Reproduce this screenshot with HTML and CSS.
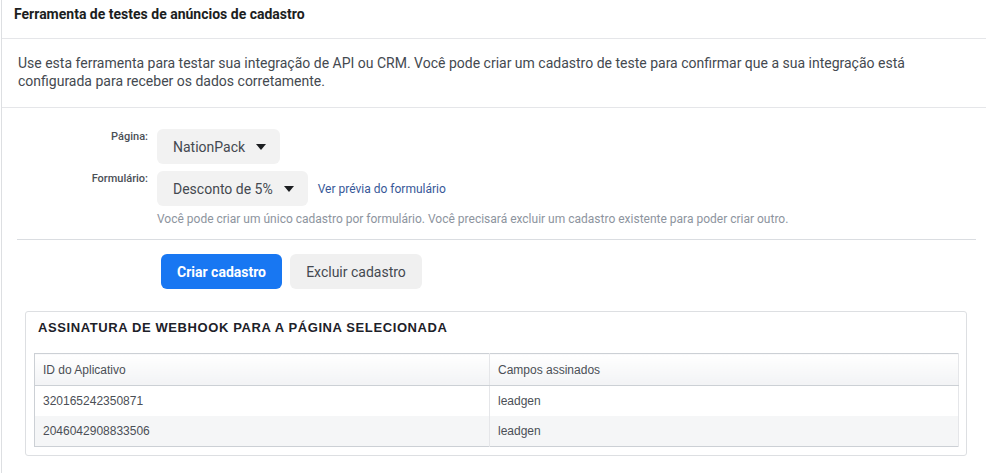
FILE: index.html
```html
<!DOCTYPE html>
<html lang="pt-BR">
<head>
<meta charset="utf-8">
<title>Ferramenta de testes de anúncios de cadastro</title>
<link rel="stylesheet" href="styles.css">
</head>
<body>
<div class="panel">
  <div class="panel-header">Ferramenta de testes de anúncios de cadastro</div>
  <div class="intro">Use esta ferramenta para testar sua integração de API ou CRM. Você pode criar um cadastro de teste para confirmar que a sua integração está configurada para receber os dados corretamente.</div>
  <div class="body">
    <div class="form">
      <div class="label">Página:</div>
      <div class="field">
        <div class="select">NationPack<svg class="caret" width="10" height="6" viewBox="0 0 10 6"><path d="M0 0H10L5 6Z"/></svg></div>
      </div>
      <div class="label">Formulário:</div>
      <div class="field">
        <div class="select">Desconto de 5%<svg class="caret" width="10" height="6" viewBox="0 0 10 6"><path d="M0 0H10L5 6Z"/></svg></div>
        <a class="link" href="#">Ver prévia do formulário</a>
      </div>
      <div></div>
      <div class="note">Você pode criar um único cadastro por formulário. Você precisará excluir um cadastro existente para poder criar outro.</div>
    </div>
    <div class="divider"></div>
    <div class="actions">
      <button class="btn btn-primary">Criar cadastro</button>
      <button class="btn btn-secondary">Excluir cadastro</button>
    </div>
    <div class="card">
      <div class="card-title">ASSINATURA DE WEBHOOK PARA A PÁGINA SELECIONADA</div>
      <table class="grid">
        <thead>
          <tr><th>ID do Aplicativo</th><th>Campos assinados</th></tr>
        </thead>
        <tbody>
          <tr><td>320165242350871</td><td>leadgen</td></tr>
          <tr class="alt"><td>2046042908833506</td><td>leadgen</td></tr>
        </tbody>
      </table>
    </div>
  </div>
</div>
</body>
</html>
```
FILE: styles.css
```css
html, body {
  margin: 0;
  padding: 0;
  background: #fff;
}
body {
  font-family: Roboto, "Liberation Sans", Arial, sans-serif;
  color: #1c1e21;
}
.panel {
  margin-left: 1px;
  border-left: 1px solid #dddfe2;
  min-height: 473px;
  box-sizing: border-box;
}
.panel-header {
  height: 39px;
  box-sizing: border-box;
  padding: 6px 12px 0;
  font-size: 14px;
  line-height: 16px;
  font-weight: 700;
  color: #1c1e21;
  border-bottom: 1px solid #e5e6e9;
}
.intro {
  padding: 15px 16px 17px 16px;
  font-size: 14px;
  line-height: 18px;
  color: #444950;
  border-bottom: 1px solid #e5e6e9;
}
.body {
  padding: 21px 10px 0 15px;
}
.form {
  display: grid;
  grid-template-columns: 131px 1fr;
  column-gap: 9px;
  row-gap: 7px;
}
.label {
  text-align: right;
  font-size: 11px;
  line-height: 14px;
  font-weight: 500;
  color: #4b4f56;
  padding-top: 1px;
}
.field {
  display: flex;
  align-items: center;
  gap: 10px;
}
.select {
  height: 35px;
  box-sizing: border-box;
  padding: 0 14px 0 16px;
  display: inline-flex;
  align-items: center;
  gap: 11px;
  background: #f2f2f2;
  border-radius: 6px;
  font-size: 14px;
  color: #444950;
}
.caret {
  fill: #1c1e21;
}
.link {
  font-size: 12px;
  color: #385898;
  text-decoration: none;
}
.note {
  margin-top: -2px;
  font-size: 12px;
  line-height: 16px;
  color: #8d949e;
}
.divider {
  margin-top: 12px;
  border-top: 1px solid #dadde1;
}
.actions {
  display: flex;
  gap: 8px;
  padding: 14px 0 0 144px;
}
.btn {
  height: 35px;
  padding: 0 16px;
  border: 0;
  border-radius: 6px;
  font-family: Roboto, "Liberation Sans", Arial, sans-serif;
  font-size: 14px;
  cursor: pointer;
}
.btn-primary {
  background: #1877f2;
  color: #fff;
  font-weight: 700;
  width: 121px;
}
.btn-secondary {
  background: #f0f0f0;
  color: #444950;
  width: 132px;
}
.card {
  margin: 22px 9px 0 8px;
  border: 1px solid #dddfe2;
  border-radius: 3px;
  padding: 8px 7px 8px 8px;
}
.card-title {
  padding-left: 4px;
  font-family: "Liberation Sans", Arial, sans-serif;
  font-size: 13px;
  line-height: 16px;
  font-weight: 700;
  color: #1d2129;
  letter-spacing: 0.6px;
  margin-bottom: 17px;
}
.grid {
  width: 100%;
  border-collapse: collapse;
  border: 1px solid #ccd0d5;
  font-family: "Liberation Sans", Arial, sans-serif;
  font-size: 12px;
  color: #4b4f56;
}
.grid th {
  height: 31px;
  text-align: left;
  font-weight: 400;
  padding: 0 8px;
  background: linear-gradient(#ffffff, #f2f3f5);
  border-bottom: 1px solid #ccd0d5;
  border-right: 1px solid #e5e6e9;
}
.grid td {
  height: 30px;
  padding: 0 8px;
  border-right: 1px solid #e5e6e9;
}
.grid th:first-child, .grid td:first-child {
  width: 438px;
}
.grid tr.alt td {
  background: #f5f6f7;
}
```
